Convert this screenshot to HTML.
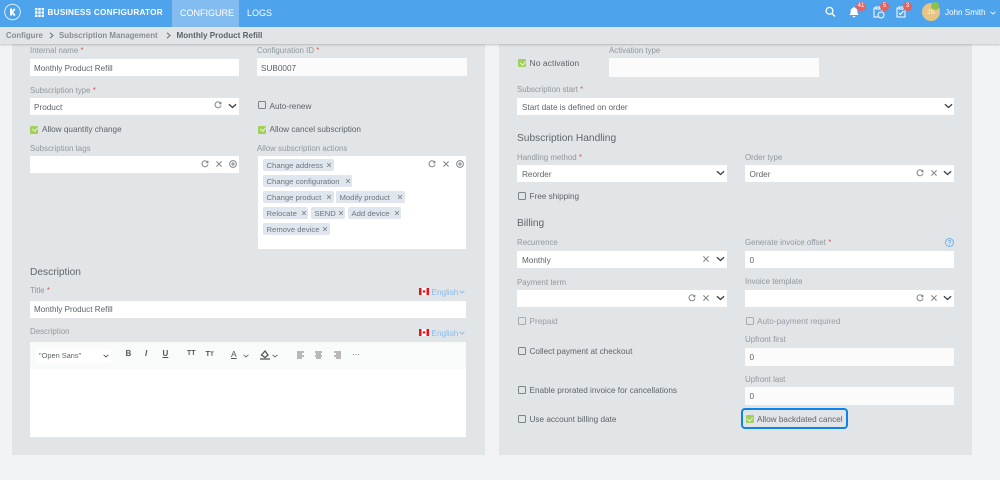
<!DOCTYPE html>
<html><head><meta charset="utf-8"><style>
html,body{margin:0;padding:0}
body{width:1000px;height:480px;overflow:hidden;background:#f2f3f5;position:relative;font-family:"Liberation Sans",sans-serif;font-size:8.2px;color:#5c6369;filter:blur(.3px)}
div,span,svg{position:absolute}
span{white-space:nowrap;line-height:16px}
span i{position:static;color:#e8564f;font-style:normal}
.p{background:#e2e5e8}
.i{background:#fff;height:17px}
.o{background:#fbfbfb}
.l{color:#90979d;font-size:7.9px}
.t{font-size:8.2px;color:#5c6369}
.m{font-size:8.1px}
.h{font-size:10.2px;color:#5f666c;line-height:17px}
.c{width:6px;height:6px;margin-top:.3px;border:1px solid #7d8489;border-radius:1.5px;background:transparent}
.k{width:8px;height:8px;margin:.7px 0 0 .4px;background:#a3d05a;border-radius:1px}
.k:after{content:"";position:absolute;left:2.2px;top:.8px;width:2.5px;height:4px;border:solid #e8f3d6;border-width:0 1.1px 1.1px 0;transform:rotate(40deg)}
.g{background:#dfe6ee;height:12px;border-radius:2px}
.g span{left:3.5px;top:0;color:#6d7780;font-size:7.7px;line-height:14px}
.n{color:#fff;font-size:9px;line-height:14px}
.b{width:9px;height:9px;border-radius:50%;background:#e8615c;color:#fff;font-size:6px;line-height:9px;text-align:center}
svg{fill:none;stroke:#80868b;stroke-width:1}
.e{color:#86bbec;font-size:8.2px}
.tb{font-weight:bold;font-size:8px;color:#555}
</style></head><body>
<svg width="0" height="0" style="position:absolute"><defs>
<symbol id="r" viewBox="0 0 8 8"><path d="M6.7 2.4A3 3 0 1 0 7 4.3M6.9.9v1.8H5.1" fill="none"/></symbol>
<symbol id="x" viewBox="0 0 8 8"><path d="M1.4 1.4l5.2 5.2M6.6 1.4L1.4 6.6" fill="none"/></symbol>
<symbol id="v" viewBox="0 0 10 6"><path d="M1 1l4 3.6L9 1" fill="none" stroke-width="1.5"/></symbol>
<symbol id="a" viewBox="0 0 8 8"><circle cx="4" cy="4" r="3.4" fill="none"/><path d="M4 2v4M2 4h4" fill="none"/></symbol>
<symbol id="s" viewBox="0 0 5 7"><path d="M1 .8l3 2.700-3 2.700" fill="none" stroke-width="1.100"/></symbol>
</defs></svg>

<div style="left:0;top:0;width:1000px;height:27px;background:#4da3ec"></div>
<div style="left:172px;top:0;width:67px;height:27px;background:#83bcf0"></div>
<svg style="left:4px;top:3px;stroke:#fff" width="18" height="18" viewBox="0 0 18 18"><circle cx="8.500" cy="9" r="7.800" stroke-width="1" stroke="#dceefc"/><path d="M7 5.500v7M10.800 6L7.800 9l3 3.500" stroke-width="2"/></svg>
<svg style="left:35px;top:8px;stroke:none;fill:#fff" width="9" height="9" viewBox="0 0 9 9"><path d="M0 0h2.400v2.400H0zM3.300 0h2.400v2.400H3.300zM6.600 0H9v2.400H6.600zM0 3.300h2.400v2.400H0zM3.300 3.300h2.400v2.400H3.300zM6.600 3.300H9v2.400H6.600zM0 6.600h2.400V9H0zM3.300 6.600h2.400V9H3.300zM6.600 6.600H9V9H6.600z"/></svg>
<span class="n" style="left:47.5px;top:6px;font-weight:bold;font-size:8.200px;letter-spacing:.03em">BUSINESS CONFIGURATOR</span>
<span class="n" style="left:180px;top:6px;font-size:9px">CONFIGURE</span>
<span class="n" style="left:247px;top:6px;font-size:9px">LOGS</span>
<svg style="left:825px;top:6px;stroke:#fff;stroke-width:1.300" width="11" height="12" viewBox="0 0 11 12"><circle cx="4.500" cy="4.800" r="3.400"/><path d="M7 7.500l3 3"/></svg>
<svg style="left:849px;top:7px;stroke:none;fill:#fff" width="10" height="11" viewBox="0 0 10 11"><path d="M5 0a1 1 0 0 1 1 1c2 .5 2.400 2 2.400 3.600 0 2 .7 2.600 1.300 3.400H.3C.9 7.200 1.600 6.600 1.600 4.600 1.600 3 2 1.500 4 1a1 1 0 0 1 1-1zM3.700 9h2.600a1.300 1.300 0 0 1-2.600 0z"/></svg>
<div class="b" style="left:856px;top:2px;width:10px">41</div>
<svg style="left:873px;top:6px;stroke:#fff" width="12" height="13" viewBox="0 0 12 13"><path d="M3 2H1v9h4M8 2h1v3M3 1h4v2H3z"/><circle cx="8" cy="9" r="3"/></svg>
<div class="b" style="left:880px;top:2px">5</div>
<svg style="left:896px;top:6px;stroke:#fff" width="12" height="12" viewBox="0 0 12 12"><path d="M3 2H1v9h8V2H8M3 1h4v2H3zM3 7l1.500 1.500L7.500 5"/></svg>
<div class="b" style="left:903px;top:2px">3</div>
<div style="left:922px;top:3px;width:18px;height:18px;border-radius:50%;background:#e5c485;color:#fff;font-size:6.500px;line-height:19px;text-align:center">JS</div>
<div style="left:931px;top:2px;width:8px;height:8px;border-radius:50%;background:#8bc34a"></div>
<span class="n" style="left:945px;top:6px;font-size:8.100px">John Smith</span>
<svg style="left:990px;top:11px;stroke:#fff" width="6" height="4"><use href="#v"/></svg>

<div style="left:0;top:27px;width:1000px;height:17px;background:#e2e5e8;box-shadow:0 1px 2px rgba(0,0,0,.2);z-index:2"></div>
<div style="left:0;top:27px;width:1000px;height:17px;z-index:3">
<span style="left:6px;top:1px;font-weight:bold;color:#868d93;font-size:7.800px">Configure</span>
<svg style="left:49px;top:5px;stroke:#70777d" width="5" height="7"><use href="#s"/></svg>
<span style="left:59px;top:1px;font-weight:bold;color:#868d93;font-size:7.900px">Subscription Management</span>
<svg style="left:166px;top:5px;stroke:#70777d" width="5" height="7"><use href="#s"/></svg>
<span style="left:176.500px;top:1px;font-weight:bold;color:#5c6369;font-size:8.100px">Monthly Product Refill</span>
</div>

<div class="p" style="left:12px;top:44px;width:472.500px;height:411px"></div>
<div class="p" style="left:499px;top:44px;width:473px;height:411px"></div>

<!-- left -->
<span class="l" style="left:30px;top:43px">Internal name <i>*</i></span>
<div class="i" style="left:30px;top:59px;width:209px"></div>
<span class="t m" style="left:34px;top:61px">Monthly Product Refill</span>
<span class="l" style="left:257px;top:43px">Configuration ID <i>*</i></span>
<div class="i o" style="left:257px;top:58px;width:210px;height:18px"></div>
<span class="t" style="left:261px;top:61px">SUB0007</span>

<span class="l" style="left:30px;top:83px">Subscription type <i>*</i></span>
<div class="i" style="left:30px;top:98px;width:209px"></div>
<span class="t" style="left:34px;top:100px">Product</span>
<svg style="left:214px;top:101px" width="8" height="8"><use href="#r"/></svg>
<svg style="left:228px;top:103px;stroke:#3c4349" width="9" height="6"><use href="#v"/></svg>
<div class="c" style="left:258px;top:101px"></div>
<span class="t" style="left:269.500px;top:99px">Auto-renew</span>

<div class="k" style="left:30px;top:125px"></div>
<span class="t" style="left:42px;top:122px">Allow quantity change</span>
<div class="k" style="left:258px;top:125px"></div>
<span class="t" style="left:269.500px;top:122px">Allow cancel subscription</span>

<span class="l" style="left:30px;top:141px">Subscription tags</span>
<div class="i" style="left:30px;top:156px;width:209px"></div>
<svg style="left:201px;top:160px" width="8" height="8"><use href="#r"/></svg>
<svg style="left:215px;top:160px" width="8" height="8"><use href="#x"/></svg>
<svg style="left:229px;top:160px" width="8" height="8"><use href="#a"/></svg>

<span class="l" style="left:257px;top:141px">Allow subscription actions</span>
<div class="i" style="left:258px;top:156px;width:208px;height:93px"></div>
<svg style="left:428px;top:160px" width="8" height="8"><use href="#r"/></svg>
<svg style="left:442px;top:160px" width="8" height="8"><use href="#x"/></svg>
<svg style="left:456px;top:160px" width="8" height="8"><use href="#a"/></svg>
<div class="g" style="left:263px;top:159px;width:70.500px"><span>Change address</span></div>
<svg style="left:326px;top:162px" width="6" height="6"><use href="#x"/></svg>
<div class="g" style="left:263px;top:175px;width:89px"><span>Change configuration</span></div>
<svg style="left:345px;top:178px" width="6" height="6"><use href="#x"/></svg>
<div class="g" style="left:263px;top:191px;width:71px"><span>Change product</span></div>
<svg style="left:326px;top:194px" width="6" height="6"><use href="#x"/></svg>
<div class="g" style="left:336px;top:191px;width:69px"><span>Modify product</span></div>
<svg style="left:397px;top:194px" width="6" height="6"><use href="#x"/></svg>
<div class="g" style="left:263px;top:207px;width:45px"><span>Relocate</span></div>
<svg style="left:300.500px;top:210px" width="6" height="6"><use href="#x"/></svg>
<div class="g" style="left:311px;top:207px;width:34px"><span>SEND</span></div>
<svg style="left:337.500px;top:210px" width="6" height="6"><use href="#x"/></svg>
<div class="g" style="left:348px;top:207px;width:53px"><span>Add device</span></div>
<svg style="left:393.500px;top:210px" width="6" height="6"><use href="#x"/></svg>
<div class="g" style="left:263px;top:223px;width:67px"><span>Remove device</span></div>
<svg style="left:322px;top:226px" width="6" height="6"><use href="#x"/></svg>

<span class="h" style="left:30px;top:264px">Description</span>
<span class="l" style="left:30px;top:283px">Title <i>*</i></span>
<svg style="left:419px;top:288px;stroke:none" width="10" height="7" viewBox="0 0 10 7"><rect width="10" height="7" fill="#fff"/><rect width="2.500" height="7" fill="#e8121c"/><rect x="7.500" width="2.500" height="7" fill="#e8121c"/><path d="M5 1.500l1 1.500.5 0-.3 1.500H3.800L3.500 3H4z" fill="#e8121c"/></svg>
<span class="e" style="left:431.500px;top:285px">English</span>
<svg style="left:459px;top:290px;stroke:#86bbec" width="6" height="4"><use href="#v"/></svg>
<div class="i" style="left:30px;top:301px;width:436px"></div>
<span class="t m" style="left:34px;top:302px">Monthly Product Refill</span>
<span class="l" style="left:30px;top:324px">Description</span>
<svg style="left:419px;top:329px;stroke:none" width="10" height="7" viewBox="0 0 10 7"><rect width="10" height="7" fill="#fff"/><rect width="2.500" height="7" fill="#e8121c"/><rect x="7.500" width="2.500" height="7" fill="#e8121c"/><path d="M5 1.500l1 1.500.5 0-.3 1.500H3.800L3.500 3H4z" fill="#e8121c"/></svg>
<span class="e" style="left:431.500px;top:326px">English</span>
<svg style="left:459px;top:331px;stroke:#86bbec" width="6" height="4"><use href="#v"/></svg>
<div class="i" style="left:30px;top:342px;width:436px;height:95px"></div>
<div style="left:30px;top:342px;width:436px;height:27px;background:#f9fafa"></div>
<div style="left:36px;top:348.500px;width:75px;height:14px;background:#fff"></div>
<span class="t" style="left:39px;top:347.500px;font-size:7.400px">"Open Sans"</span>
<svg style="left:103px;top:354px;stroke:#555" width="6" height="4"><use href="#v"/></svg>
<span class="tb" style="left:125.500px;top:346px">B</span>
<span class="tb" style="left:145px;top:346px;font-style:italic">I</span>
<span class="tb" style="left:162.500px;top:345.500px;text-decoration:underline">U</span>
<span class="tb" style="left:187px;top:346px;font-size:7px">TT</span>
<span class="tb" style="left:205.500px;top:346px;font-size:7.500px">T<small style="font-size:6px">T</small></span>
<span style="left:231px;top:345.500px;font-size:8.500px;color:#555;text-decoration:underline">A</span>
<svg style="left:243px;top:354px;stroke:#666" width="6" height="4"><use href="#v"/></svg>
<svg style="left:259.500px;top:350px;stroke:#555" width="10" height="10" viewBox="0 0 10 10"><path d="M5 1L1.500 5 5 7.500 8 5zM0 9h10" stroke-width="1.300"/></svg>
<svg style="left:272px;top:354px;stroke:#666" width="6" height="4"><use href="#v"/></svg>
<svg style="left:296.500px;top:351px;stroke:#777" width="8" height="8" viewBox="0 0 8 8"><path d="M0 1h7M0 3h5M0 5h7M0 7h5"/></svg>
<svg style="left:315px;top:351px;stroke:#777" width="8" height="8" viewBox="0 0 8 8"><path d="M0 1h7M1 3h5M0 5h7M1 7h5"/></svg>
<svg style="left:333.500px;top:351px;stroke:#777" width="8" height="8" viewBox="0 0 8 8"><path d="M0 1h7M2 3h5M0 5h7M2 7h5"/></svg>
<span style="left:352px;top:351px;font-size:8px;color:#666;line-height:8px">···</span>

<!-- right -->
<div class="k" style="left:518px;top:58.500px"></div>
<span class="t" style="left:529.500px;top:55px;font-size:8.600px">No activation</span>
<span class="l" style="left:609px;top:42.500px">Activation type</span>
<div class="i o" style="left:609px;top:58px;width:210px;height:18.500px"></div>
<span class="l" style="left:517px;top:82px">Subscription start <i>*</i></span>
<div class="i" style="left:517px;top:98px;width:437px"></div>
<span class="t" style="left:522px;top:100px">Start date is defined on order</span>
<svg style="left:944px;top:103px;stroke:#3c4349" width="9" height="6"><use href="#v"/></svg>
<span class="h" style="left:517px;top:130px">Subscription Handling</span>
<span class="l" style="left:517px;top:150px">Handling method <i>*</i></span>
<div class="i" style="left:517px;top:165px;width:209.500px"></div>
<span class="t" style="left:522px;top:167px">Reorder</span>
<svg style="left:716px;top:170px;stroke:#3c4349" width="9" height="6"><use href="#v"/></svg>
<span class="l" style="left:745px;top:150px">Order type</span>
<div class="i" style="left:745px;top:165px;width:209px"></div>
<span class="t" style="left:749.500px;top:167px">Order</span>
<svg style="left:916px;top:169px" width="8" height="8"><use href="#r"/></svg>
<svg style="left:930px;top:169px" width="8" height="8"><use href="#x"/></svg>
<svg style="left:943px;top:170px;stroke:#3c4349" width="9" height="6"><use href="#v"/></svg>
<div class="c" style="left:518px;top:192px"></div>
<span class="t" style="left:529.500px;top:189px">Free shipping</span>

<span class="h" style="left:517px;top:215px">Billing</span>
<span class="l" style="left:517px;top:235px">Recurrence</span>
<div class="i" style="left:517px;top:251px;width:209.500px"></div>
<span class="t" style="left:522px;top:253px">Monthly</span>
<svg style="left:702px;top:255px" width="8" height="8"><use href="#x"/></svg>
<svg style="left:716px;top:256px;stroke:#3c4349" width="9" height="6"><use href="#v"/></svg>
<span class="l" style="left:745px;top:235px">Generate invoice offset <i>*</i></span>
<svg style="left:945px;top:238px;stroke:#71b2ec" width="9" height="9" viewBox="0 0 9 9"><circle cx="4.500" cy="4.500" r="4"/><path d="M3.300 3.400a1.200 1.200 0 1 1 1.700 1.200c-.4.200-.5.500-.5.900M4.500 6.300v.7"/></svg>
<div class="i" style="left:745px;top:251px;width:209px"></div>
<span class="t" style="left:749.500px;top:253px">0</span>

<span class="l" style="left:517px;top:274.500px">Payment term</span>
<div class="i" style="left:517px;top:290px;width:209.500px"></div>
<svg style="left:688px;top:294px" width="8" height="8"><use href="#r"/></svg>
<svg style="left:702px;top:294px" width="8" height="8"><use href="#x"/></svg>
<svg style="left:716px;top:295px;stroke:#3c4349" width="9" height="6"><use href="#v"/></svg>
<span class="l" style="left:745px;top:274px">Invoice template</span>
<div class="i" style="left:745px;top:290px;width:209px"></div>
<svg style="left:916px;top:294px" width="8" height="8"><use href="#r"/></svg>
<svg style="left:930px;top:294px" width="8" height="8"><use href="#x"/></svg>
<svg style="left:943px;top:295px;stroke:#3c4349" width="9" height="6"><use href="#v"/></svg>

<div class="c" style="left:518px;top:317px;border-color:#a6acb1"></div>
<span class="t" style="left:529.500px;top:314px;color:#969ca2">Prepaid</span>
<div class="c" style="left:746px;top:317px;border-color:#a6acb1"></div>
<span class="t" style="left:757px;top:314px;color:#969ca2">Auto-payment required</span>
<div class="c" style="left:518px;top:347px"></div>
<span class="t" style="left:529.500px;top:343.500px">Collect payment at checkout</span>
<span class="l" style="left:745px;top:332px">Upfront first</span>
<div class="i o" style="left:745px;top:348px;width:209px;height:18px"></div>
<span class="t" style="left:749.500px;top:350px">0</span>
<div class="c" style="left:518px;top:386px"></div>
<span class="t" style="left:529.500px;top:382.500px">Enable prorated invoice for cancellations</span>
<span class="l" style="left:745px;top:371.500px">Upfront last</span>
<div class="i o" style="left:745px;top:387px;width:209px;height:18px"></div>
<span class="t" style="left:749.500px;top:389px">0</span>
<div class="c" style="left:518px;top:415px"></div>
<span class="t" style="left:529.500px;top:411.500px">Use account billing date</span>
<div style="left:741px;top:408px;width:102.500px;height:16.500px;border:2px solid #0a84ea;border-radius:4px"></div>
<div class="k" style="left:745.500px;top:414.500px"></div>
<span class="t" style="left:757px;top:411.500px">Allow backdated cancel</span>
</body></html>
